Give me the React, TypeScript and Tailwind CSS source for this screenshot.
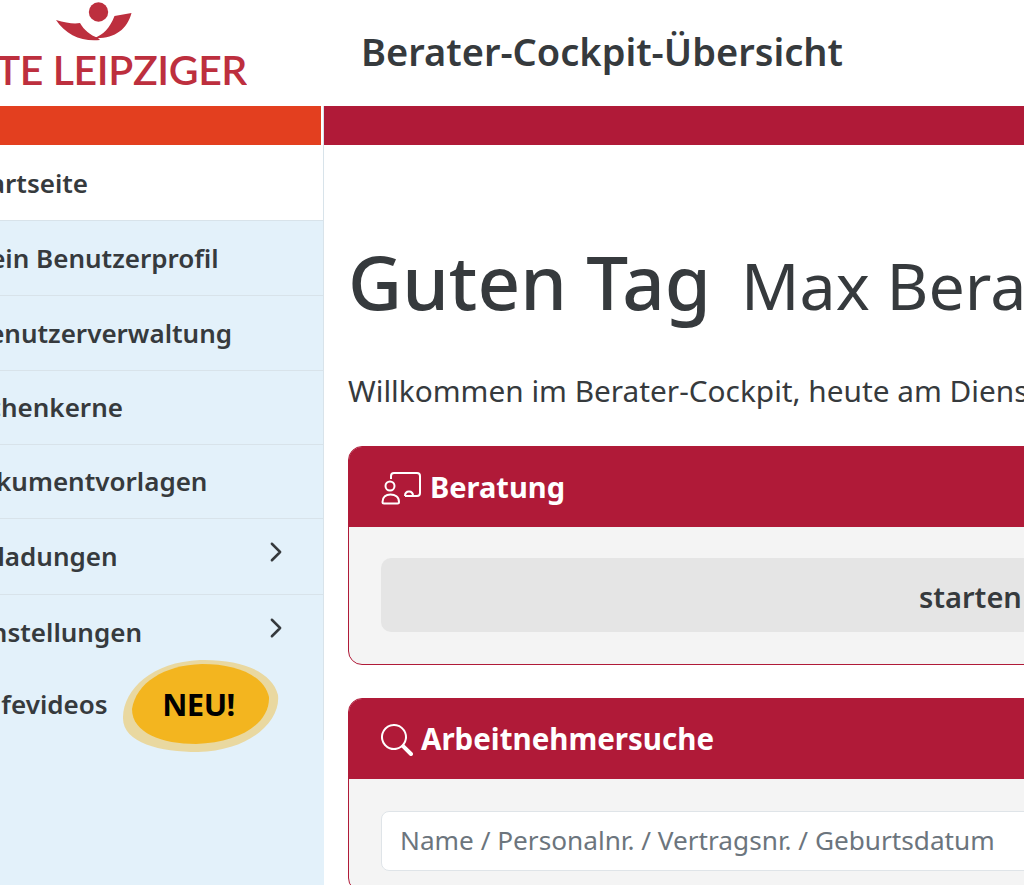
import { BsChevronRight, BsSearch } from 'react-icons/bs';

const menu = [
  { label: 'Startseite', active: true, h: 'h-[75px]', ml: 'ml-[-35px]' },
  { label: 'Mein Benutzerprofil', h: 'h-[75px]', ml: 'ml-[-34px]' },
  { label: 'Benutzerverwaltung', h: 'h-[75px]', ml: 'ml-[-28px]' },
  { label: 'Rechenkerne', h: 'h-[74px]', ml: 'ml-[-44px]' },
  { label: 'Dokumentvorlagen', h: 'h-[74px]', ml: 'ml-[-39px]' },
  { label: 'Einladungen', arrow: true, h: 'h-[76px]', ml: 'ml-[-41px]' },
  { label: 'Einstellungen', arrow: true, h: 'h-[75px]', ml: 'ml-[-31px]', last: true },
];

const App = () => {
  return (
    <div className="w-[1024px] h-[885px] overflow-hidden bg-white flex flex-col font-['Noto_Sans',sans-serif] text-[#363a3d]">
      {/* Header */}
      <header className="h-[106px] flex shrink-0">
        <div className="w-[324px] shrink-0">
          <div className="w-[247px] h-full flex flex-col items-end overflow-hidden">
            <svg viewBox="0 0 76 41" className="w-[76px] h-[41px] mr-[115px] mt-[2px] shrink-0">
              <circle cx="42.5" cy="10" r="9.7" fill="#bd2f3e" />
              <path d="M0 18 C10 21 18 22 24 21 C28 28 34 33 42 36 L44 38 C26 40 10 33 0 18Z" fill="#bd2f3e" />
              <path d="M75.5 11 C71 28 58 37 38 36 C47 33 54 26 58.5 14 Z" fill="#bd2f3e" />
            </svg>
            <div className="font-['Lato',sans-serif] text-[41px] leading-[42px] mt-[6px] text-[#bd2f3e] whitespace-nowrap font-semibold tracking-[-0.4px]">ALTE LEIPZIGER</div>
          </div>
        </div>
        <div className="flex-1 pl-[37px] pt-[25px]">
          <h1 className="text-[38px] leading-[52px] font-semibold whitespace-nowrap">Berater-Cockpit-Übersicht</h1>
        </div>
      </header>

      <div className="flex flex-1 min-h-0">
        {/* Sidebar */}
        <aside className="w-[324px] shrink-0 bg-[#e3f1fa] flex flex-col relative">
          <div className="h-[634px] border-r border-[#d8e3ea] shrink-0 overflow-hidden">
            <div className="h-[40px] bg-white pr-[2px] shrink-0">
              <div className="h-[39px] bg-[#e33f1f]"></div>
            </div>
            {menu.map((item) => (
              <div
                key={item.label}
                className={`${item.h} ${item.active ? 'bg-white' : ''} ${item.last ? '' : 'border-b border-[#d8e3ea]'} flex items-center justify-between pr-[36px] shrink-0`}
              >
                <span className={`${item.ml} text-[26px] font-semibold whitespace-nowrap`}>{item.label}</span>
                {item.arrow && <BsChevronRight className="w-[22px] h-[22px] mb-[10px]" stroke="currentColor" strokeWidth={0.8} />}
              </div>
            ))}
            <div className="h-[68px] flex items-center">
              <span className="ml-[-33px] text-[26px] font-semibold whitespace-nowrap">Hilfevideos</span>
            </div>
          </div>

          {/* NEU badge */}
          <div className="absolute left-[122px] top-[553px] w-[158px] h-[94px] flex items-center justify-center">
            <svg viewBox="0 0 158 94" className="absolute inset-0 w-full h-full">
              <path d="M1 58 C2 30 30 3 78 1 C118 0 150 12 156 36 C159 62 128 92 76 93 C38 93 0 84 1 58Z" fill="#e9d8a0" />
              <path d="M10 50 C14 24 42 6 80 5 C114 5 142 16 147 38 C148 64 118 84 74 85 C40 85 10 74 10 50Z" fill="#f3b51f" />
            </svg>
            <span className="relative text-[31px] font-bold text-black mb-[3px] mr-[5px] tracking-[-0.5px]">NEU!</span>
          </div>
        </aside>

        {/* Main */}
        <main className="flex-1 min-w-0 overflow-hidden flex flex-col">
          <div className="h-[39px] bg-[#b01a38] shrink-0"></div>
          <div className="pl-[24px] pt-[90px]">
            <div className="flex items-baseline whitespace-nowrap h-[92px]">
              <span className="text-[74.5px] font-medium leading-[92px]">Guten Tag</span>
              <span className="text-[64.5px] font-normal ml-[30px] leading-[92px]">Max Berater</span>
            </div>
            <p className="text-[29.8px] mt-[44px] leading-[40px] whitespace-nowrap">Willkommen im Berater-Cockpit, heute am Dienstag</p>

            {/* Beratung */}
            <section className="mt-[35px] w-[760px] rounded-[14px] border-[1.5px] border-[#b01a38] bg-[#f4f4f4] overflow-hidden">
              <div className="h-[80px] bg-[#b01a38] flex items-center gap-[9px] pl-[32px] text-white">
                <svg viewBox="0 0 40 34" className="w-[40px] h-[34px] mt-[2px]" fill="none" stroke="currentColor" strokeWidth="2">
                  <path d="M10 8 V5 a3 3 0 0 1 3-3 H36 a3 3 0 0 1 3 3 V22 a3 3 0 0 1-3 3 H24" />
                  <circle cx="9" cy="15" r="4.5" />
                  <path d="M1.5 31 C1.5 26 5 23.5 9.5 23.5 C14 23.5 18 26 18 31 a1.5 1.5 0 0 1-1.5 1.5 H3 a1.5 1.5 0 0 1-1.5-1.5Z" />
                  <path d="M24 25 c0-3 1.5-4.5 4-4.5 s4 1.5 4 4.5" />
                </svg>
                <span className="text-[29px] font-bold">Beratung</span>
              </div>
              <div className="pt-[31px] pb-[32px] pl-[32px]">
                <div className="h-[74px] w-[760px] rounded-[10px] bg-[#e5e5e5] flex items-center pl-[538px] pt-[3px]">
                  <span className="text-[29px] font-semibold">starten</span>
                </div>
              </div>
            </section>

            {/* Arbeitnehmersuche */}
            <section className="mt-[33px] w-[760px] rounded-[14px] border-[1.5px] border-[#b01a38] bg-[#f4f4f4] overflow-hidden">
              <div className="h-[80px] bg-[#b01a38] flex items-center gap-[8px] pl-[32px] text-white">
                <BsSearch className="w-[32px] h-[32px] mt-[2px]" />
                <span className="text-[29.5px] font-bold">Arbeitnehmersuche</span>
              </div>
              <div className="pt-[32px] pl-[32px] pb-[20px]">
                <div className="h-[60px] w-[760px] rounded-[8px] bg-white border border-[#dfe4e8] flex items-center pl-[18px]">
                  <span className="text-[26.2px] text-[#6c757d] whitespace-nowrap">Name / Personalnr. / Vertragsnr. / Geburtsdatum</span>
                </div>
              </div>
            </section>
          </div>
        </main>
      </div>
    </div>
  );
};

export default App;
